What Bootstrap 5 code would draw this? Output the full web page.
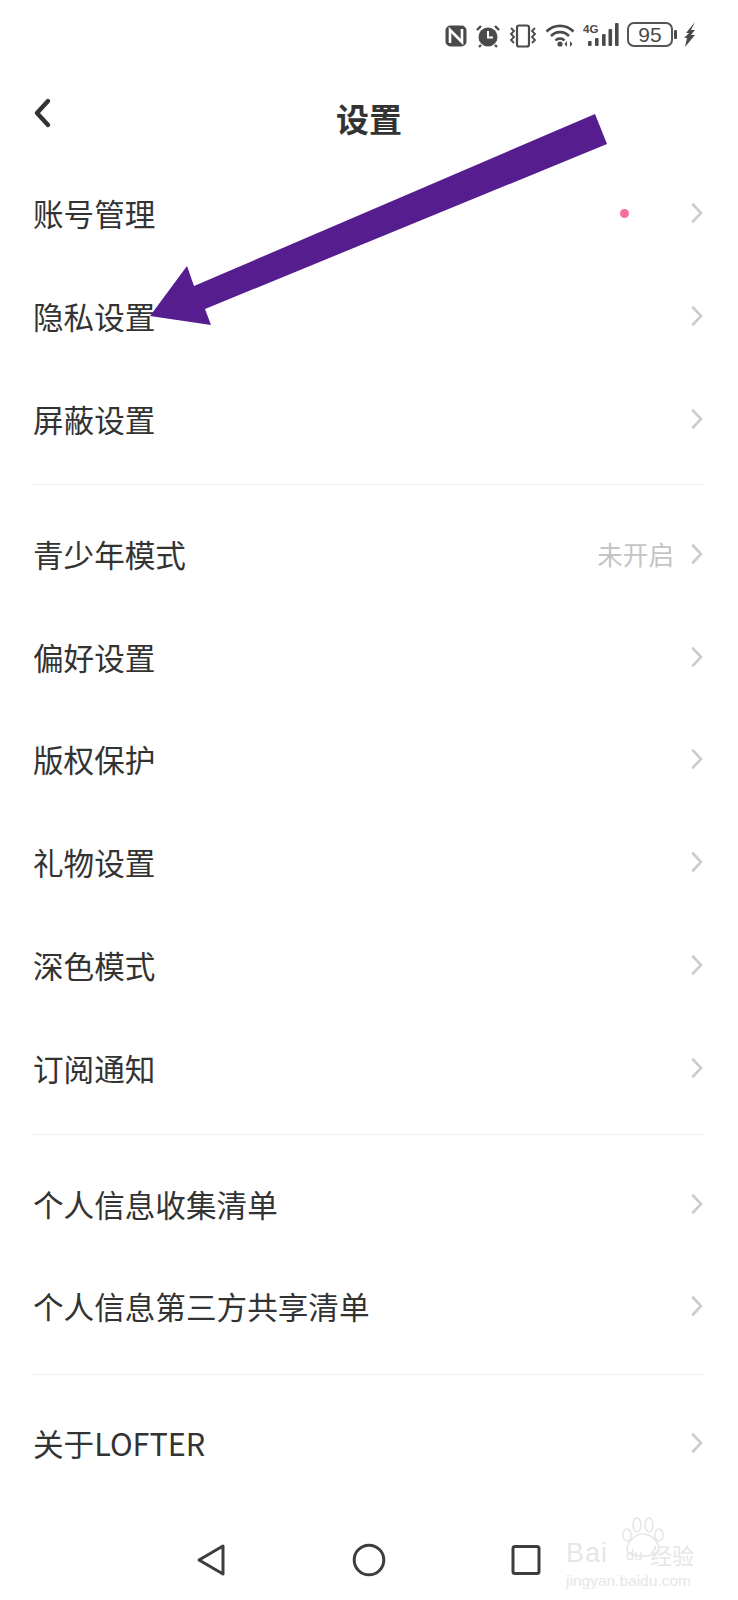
<!DOCTYPE html>
<html lang="zh">
<head>
<meta charset="utf-8">
<title>设置</title>
<link rel="stylesheet" href="https://cdn.jsdelivr.net/npm/bootstrap@5.3.0/dist/css/bootstrap.min.css">
<style>
html,body{margin:0;background:#fff}
body{font-family:"Noto Sans CJK SC","Liberation Sans",sans-serif;color:#333}
.phone{width:738px;height:1600px;overflow:hidden;position:relative;background:#fff}
.status-strip{height:70px;padding:22px 42px 0 0;align-items:flex-start;justify-content:flex-end;color:#4a4a4a}
.status-strip svg{display:block;flex:none}
.batt{width:46px;height:25px;border:2px solid #555;border-radius:7px;font:400 21px/21px "Liberation Sans",sans-serif;text-align:center;color:#4a4a4a;margin-left:8px}
.top-bar{height:92px;padding:4px 33px 0;position:relative}
.top-title{font-size:33px;font-weight:700;line-height:44px;margin:0;color:#333}
.back-link{position:absolute;left:33px;top:27px;line-height:0}
.set-row{height:102.8px;padding:0 33px;font-size:30.6px;color:#333;background:transparent;border:0;border-radius:0}
.set-row .lbl{line-height:40px}
.set-row .val{color:#c4c4c4;font-size:25.6px;margin-right:17px;line-height:40px}
.chev{display:block;margin-right:2px;flex:none}
.dot-new{width:9px;height:9px;border-radius:50%;background:#f5709a;margin-right:62px}
.sep{height:1px;background:#efefef;margin:0 33px;border:0;opacity:1}
.sep-a{margin-top:14px;margin-bottom:17px}
.sep-b{margin-top:15px;margin-bottom:17px}
.sep-c{margin-top:16px;margin-bottom:17px}
.nav-strip{position:absolute;left:0;right:0;bottom:0;height:80px}
.nav-strip svg{position:absolute;top:23px}
.arrow-over{position:absolute;left:0;top:0;pointer-events:none}
.wm{position:absolute;left:566px;top:1530px;width:140px;height:60px;color:#e6e6e6;pointer-events:none}
.wm-big{position:absolute;left:0;top:8px;font:400 27px/30px "Liberation Sans",sans-serif;letter-spacing:1px}
.wm-du{position:absolute;left:60px;top:17px;font:400 15px/16px "Liberation Sans",sans-serif}
.wm-cn{position:absolute;left:84px;top:11px;font-size:22px;line-height:26px}
.wm-url{position:absolute;left:0;top:42px;font:400 15.5px/18px "Liberation Sans",sans-serif;white-space:nowrap}
</style>
</head>
<body>
<div class="phone">
  <div class="status-strip d-flex">
    <svg width="22" height="22" viewBox="0 0 22 22" style="margin-top:3px"><rect x="0.5" y="0.5" width="21" height="21" rx="5" fill="#4a4a4a"/><path d="M5 18V5l12 12V4" fill="none" stroke="#fff" stroke-width="2.6"/><path d="M8.5 2v5M13.5 15v5" stroke="#4a4a4a" stroke-width="0"/></svg>
    <svg width="24" height="24" viewBox="0 0 24 24" style="margin:2px 0 0 9px"><circle cx="12" cy="13" r="9.5" fill="#4a4a4a"/><path d="M12 7v6.5h5" fill="none" stroke="#fff" stroke-width="2"/><path d="M1 6l4-4M23 6l-4-4" stroke="#4a4a4a" stroke-width="2.4"/><path d="M5 21l-2 2M19 21l2 2" stroke="#4a4a4a" stroke-width="2.4"/></svg>
    <svg width="30" height="24" viewBox="0 0 30 24" style="margin:2px 0 0 8px"><rect x="9" y="1.5" width="12" height="21" rx="2" fill="none" stroke="#4a4a4a" stroke-width="2.2"/><path d="M3 4l3 3-3 3 3 3-3 3 3 3M27 4l-3 3 3 3-3 3 3 3-3 3" fill="none" stroke="#4a4a4a" stroke-width="1.8"/></svg>
    <svg width="30" height="24" viewBox="0 0 30 24" style="margin:1px 0 0 7px"><path d="M1.5 8.5a19 19 0 0 1 27 0M6 13a12.5 12.5 0 0 1 18 0M10.5 17.5a6 6 0 0 1 9 0" fill="none" stroke="#4a4a4a" stroke-width="2.6"/><circle cx="15" cy="21" r="2.6" fill="#4a4a4a"/><path d="M22 18v6l-2.5-3zM25 18v6l2.5-3z" fill="#4a4a4a"/></svg>
    <svg width="36" height="25" viewBox="0 0 36 25" style="margin:0 0 0 8px"><text x="0" y="11" font-family="Liberation Sans,sans-serif" font-weight="700" font-size="11.5" fill="#4a4a4a">4G</text><rect x="5" y="19" width="3.6" height="5" rx="1" fill="#4a4a4a"/><rect x="12" y="16" width="3.6" height="8" rx="1" fill="#4a4a4a"/><rect x="19" y="12" width="3.6" height="12" rx="1" fill="#4a4a4a"/><rect x="25.5" y="7" width="3.6" height="17" rx="1" fill="#4a4a4a"/><rect x="32" y="1" width="3.6" height="23" rx="1" fill="#4a4a4a"/></svg>
    <div class="batt">95</div>
    <svg width="4" height="9" viewBox="0 0 4 9" style="margin:8px 0 0 1px"><rect width="3" height="9" rx="1" fill="#4a4a4a"/></svg>
    <svg width="12" height="25" viewBox="0 0 12 25" style="margin:0 0 0 6px"><path d="M11 0L2 11h3L0 16h3L1 25l10-12H7l4-5H7z" fill="#4a4a4a"/></svg>
  </div>

  <header class="top-bar d-flex justify-content-center align-items-center">
    <a class="back-link" href="#" aria-label="返回"><svg width="20" height="32" viewBox="0 0 20 32"><path d="M15 4L4 16l11 12" fill="none" stroke="#333" stroke-width="4.4" stroke-linecap="round" stroke-linejoin="round"/></svg></a>
    <h1 class="top-title">设置</h1>
  </header>

  <div class="list-group list-group-flush">
    <div class="list-group-item set-row d-flex align-items-center"><span class="lbl me-auto">账号管理</span><span class="dot-new"></span><svg class="chev" width="12" height="20" viewBox="0 0 12 20"><path d="M2 1.5l8 8.500-8 8.500" fill="none" stroke="#ccc" stroke-width="2.6" stroke-linecap="round"/></svg></div>
    <div class="list-group-item set-row d-flex align-items-center"><span class="lbl me-auto">隐私设置</span><svg class="chev" width="12" height="20" viewBox="0 0 12 20"><path d="M2 1.5l8 8.500-8 8.500" fill="none" stroke="#ccc" stroke-width="2.6" stroke-linecap="round"/></svg></div>
    <div class="list-group-item set-row d-flex align-items-center"><span class="lbl me-auto">屏蔽设置</span><svg class="chev" width="12" height="20" viewBox="0 0 12 20"><path d="M2 1.5l8 8.500-8 8.500" fill="none" stroke="#ccc" stroke-width="2.6" stroke-linecap="round"/></svg></div>
  </div>
  <hr class="sep sep-a">
  <div class="list-group list-group-flush">
    <div class="list-group-item set-row d-flex align-items-center"><span class="lbl me-auto">青少年模式</span><span class="val">未开启</span><svg class="chev" width="12" height="20" viewBox="0 0 12 20"><path d="M2 1.5l8 8.500-8 8.500" fill="none" stroke="#ccc" stroke-width="2.6" stroke-linecap="round"/></svg></div>
    <div class="list-group-item set-row d-flex align-items-center"><span class="lbl me-auto">偏好设置</span><svg class="chev" width="12" height="20" viewBox="0 0 12 20"><path d="M2 1.5l8 8.500-8 8.500" fill="none" stroke="#ccc" stroke-width="2.6" stroke-linecap="round"/></svg></div>
    <div class="list-group-item set-row d-flex align-items-center"><span class="lbl me-auto">版权保护</span><svg class="chev" width="12" height="20" viewBox="0 0 12 20"><path d="M2 1.5l8 8.500-8 8.500" fill="none" stroke="#ccc" stroke-width="2.6" stroke-linecap="round"/></svg></div>
    <div class="list-group-item set-row d-flex align-items-center"><span class="lbl me-auto">礼物设置</span><svg class="chev" width="12" height="20" viewBox="0 0 12 20"><path d="M2 1.5l8 8.500-8 8.500" fill="none" stroke="#ccc" stroke-width="2.6" stroke-linecap="round"/></svg></div>
    <div class="list-group-item set-row d-flex align-items-center"><span class="lbl me-auto">深色模式</span><svg class="chev" width="12" height="20" viewBox="0 0 12 20"><path d="M2 1.5l8 8.500-8 8.500" fill="none" stroke="#ccc" stroke-width="2.6" stroke-linecap="round"/></svg></div>
    <div class="list-group-item set-row d-flex align-items-center"><span class="lbl me-auto">订阅通知</span><svg class="chev" width="12" height="20" viewBox="0 0 12 20"><path d="M2 1.5l8 8.500-8 8.500" fill="none" stroke="#ccc" stroke-width="2.6" stroke-linecap="round"/></svg></div>
  </div>
  <hr class="sep sep-b">
  <div class="list-group list-group-flush">
    <div class="list-group-item set-row d-flex align-items-center"><span class="lbl me-auto">个人信息收集清单</span><svg class="chev" width="12" height="20" viewBox="0 0 12 20"><path d="M2 1.5l8 8.500-8 8.500" fill="none" stroke="#ccc" stroke-width="2.6" stroke-linecap="round"/></svg></div>
    <div class="list-group-item set-row d-flex align-items-center"><span class="lbl me-auto">个人信息第三方共享清单</span><svg class="chev" width="12" height="20" viewBox="0 0 12 20"><path d="M2 1.5l8 8.500-8 8.500" fill="none" stroke="#ccc" stroke-width="2.6" stroke-linecap="round"/></svg></div>
  </div>
  <hr class="sep sep-c">
  <div class="list-group list-group-flush">
    <div class="list-group-item set-row d-flex align-items-center"><span class="lbl me-auto">关于LOFTER</span><svg class="chev" width="12" height="20" viewBox="0 0 12 20"><path d="M2 1.5l8 8.500-8 8.500" fill="none" stroke="#ccc" stroke-width="2.6" stroke-linecap="round"/></svg></div>
  </div>

  <div class="nav-strip">
    <svg style="left:196px" width="30" height="34" viewBox="0 0 30 34"><path d="M27 3L3 17l24 14z" fill="none" stroke="#3d3d3d" stroke-width="3" stroke-linejoin="round"/></svg>
    <svg style="left:352px" width="34" height="34" viewBox="0 0 34 34"><circle cx="17" cy="17" r="14.800" fill="none" stroke="#3d3d3d" stroke-width="3"/></svg>
    <svg style="left:510px" width="32" height="34" viewBox="0 0 32 34"><rect x="3" y="3.500" width="26" height="27" rx="2" fill="none" stroke="#3d3d3d" stroke-width="3"/></svg>
  </div>

  <div class="wm">
    <svg style="position:absolute;left:52px;top:-14px" width="48" height="42" viewBox="0 0 48 42"><g fill="none" stroke="#e6e6e6" stroke-width="1.600"><ellipse cx="9" cy="19" rx="4" ry="6"/><ellipse cx="19" cy="9" rx="4" ry="7"/><ellipse cx="31" cy="9" rx="4" ry="7"/><ellipse cx="41" cy="19" rx="4" ry="6"/><path d="M25 18c-8 0-16 8-16 15 0 6 10 7 16 7s16-1 16-7c0-7-8-15-16-15z"/></g></svg>
    <span class="wm-big">Bai</span><span class="wm-du">du</span><span class="wm-cn">经验</span><span class="wm-url">jingyan.baidu.com</span>
  </div>

  <svg class="arrow-over" width="738" height="400" viewBox="0 0 738 400"><polygon points="595,114 607,144 205,309 211,325 150,316 187,266 194,286" fill="#561d8f"/></svg>
</div>
<script src="https://cdn.jsdelivr.net/npm/bootstrap@5.3.0/dist/js/bootstrap.bundle.min.js"></script>
</body>
</html>
